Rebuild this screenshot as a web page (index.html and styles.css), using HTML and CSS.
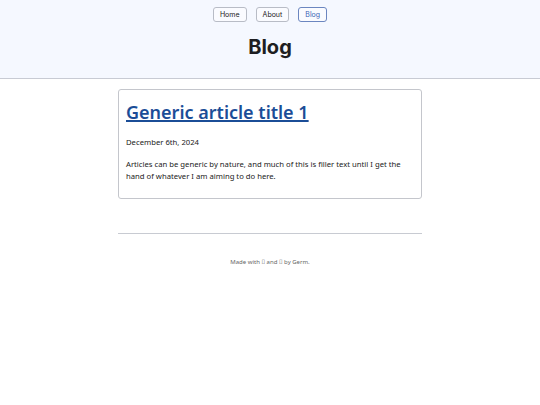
FILE: index.html
```html
<!DOCTYPE html>
<html>
<head>
<meta charset="utf-8">
<link rel="stylesheet" href="styles.css">
</head>
<body>
<header class="site-header">
  <nav class="nav">
    <a class="nav-btn" href="#">Home</a>
    <a class="nav-btn" href="#">About</a>
    <a class="nav-btn active" href="#">Blog</a>
  </nav>
  <h1 class="page-title">Blog</h1>
</header>
<main class="content">
  <article class="card">
    <h2 class="card-title"><a href="#">Generic article title 1</a></h2>
    <p class="card-date">December 6th, 2024</p>
    <p class="card-text">Articles can be generic by nature, and much of this is filler text until I get the hand of whatever I am aiming to do here.</p>
  </article>
  <hr class="divider">
  <footer class="footer">Made with &#xE000; and &#xE001; by Germ.</footer>
</main>
</body>
</html>
```
FILE: styles.css
```css
html, body {
  margin: 0;
  padding: 0;
  background: #ffffff;
}
body {
  font-family: "Noto Sans", sans-serif;
  color: #222;
}
.site-header {
  background: #f5f8ff;
  border-bottom: 1px solid #c8cbd4;
  padding-top: 7px;
  height: 71px;
}
.nav {
  display: flex;
  justify-content: center;
  gap: 9px;
}
.nav-btn {
  font-family: Inter, sans-serif;
  font-size: 7px;
  color: #222;
  text-decoration: none;
  border: 1px solid #b8bcc6;
  border-radius: 3px;
  height: 13px;
  line-height: 13px;
  padding: 0 6px;
  background: #fafbff;
}
.nav-btn.active {
  color: #3b64b5;
  border-color: #6b86c0;
}
.page-title {
  font-family: Inter, sans-serif;
  font-weight: 700;
  font-size: 20px;
  text-align: center;
  margin: 12px 0 0;
  line-height: 26px;
  color: #1e1e22;
}
.content {
  width: 304px;
  margin: 10px auto 0;
}
.card {
  border: 1px solid #c4c6cc;
  border-radius: 3px;
  padding: 9px 7px 16px;
}
.card-title {
  margin: 0;
  font-size: 18px;
  font-weight: 600;
  line-height: 27px;
}
.card-title a {
  color: #1b4d97;
  text-decoration: underline;
  text-decoration-thickness: 2px;
}
.card-date {
  font-size: 7.7px;
  margin: 10px 0 0;
  line-height: 12px;
}
.card-text {
  font-size: 7.7px;
  margin: 10px 0 0;
  line-height: 12px;
}
.divider {
  border: 0;
  border-top: 1px solid #c8cbd2;
  margin: 34px 0 0;
}
.footer {
  text-align: center;
  font-size: 6px;
  color: #666;
  margin-top: 24px;
}
```
